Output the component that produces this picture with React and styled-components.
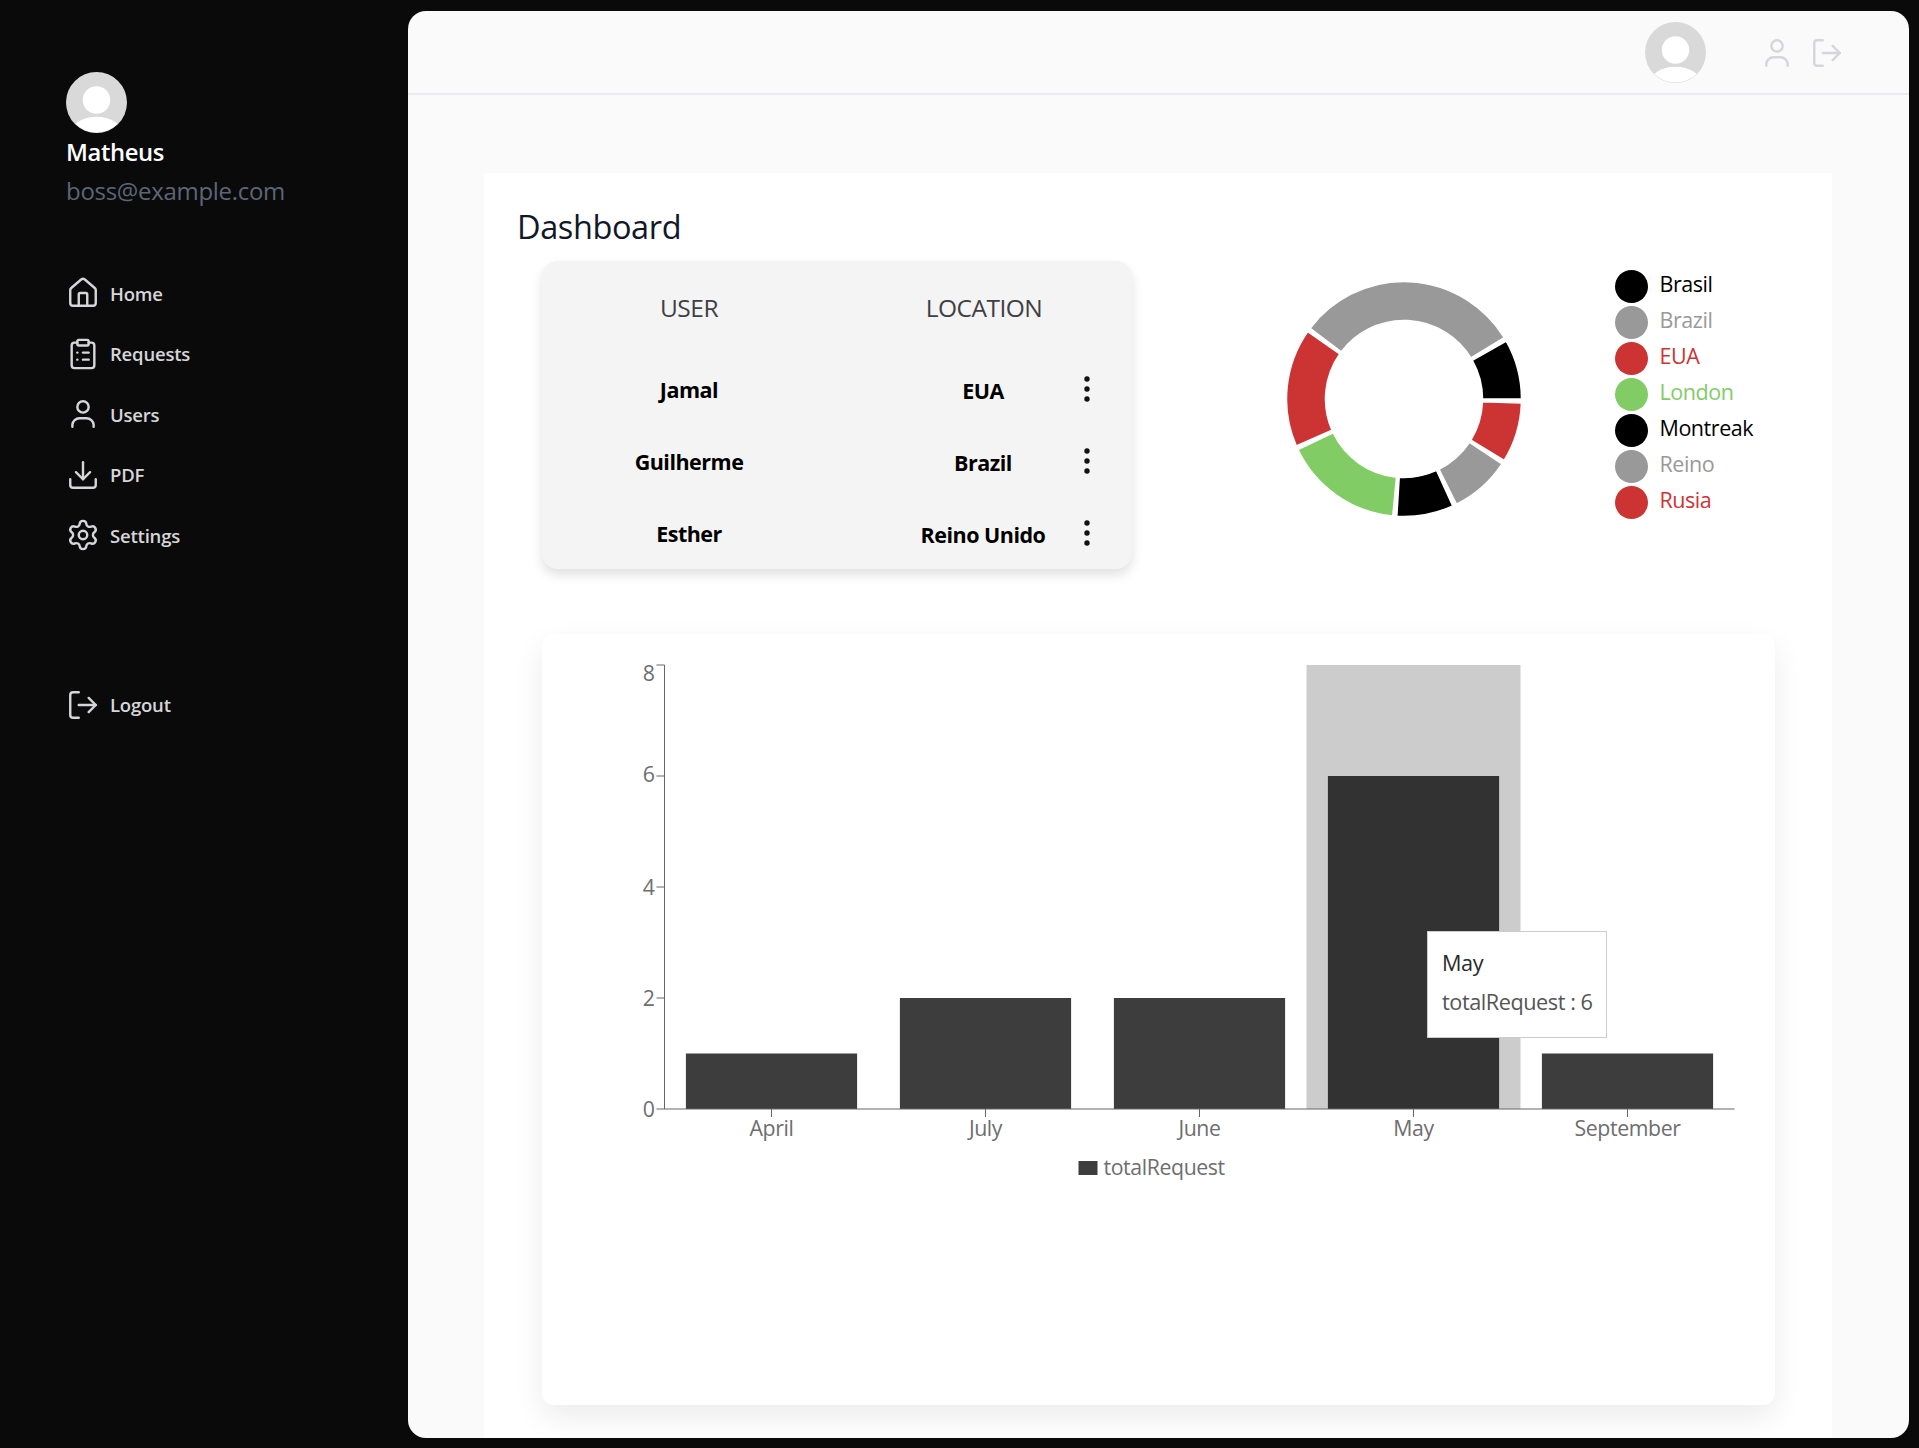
import React from "react";
import styled, { createGlobalStyle } from "styled-components";
import { House, ClipboardList, Download, Settings, LogOut } from "lucide-react";

const FONT = `"Open Sans", "Noto Sans", "Liberation Sans", sans-serif`;

const GlobalStyle = createGlobalStyle`
  html, body {
    margin: 0;
    padding: 0;
    background: #0a0a0a;
    font-family: ${FONT};
  }
  * { box-sizing: border-box; }
`;

const Page = styled.div`
  display: flex;
  height: 1448px;
  padding: 11px 10px 10px 0;
  background: #0a0a0a;
  overflow: hidden;
`;

const Sidebar = styled.aside`
  width: 407.5px;
  flex: none;
  padding: 61px 0 0 66px;
`;

const ProfileName = styled.div`
  margin-top: 3px;
  color: #fff;
  font-size: 23.8px;
  font-weight: 600;
  line-height: 32px;
  letter-spacing: -0.4px;
`;

const ProfileMail = styled.div`
  margin-top: 7px;
  color: #5b6678;
  font-size: 24px;
  line-height: 32px;
  letter-spacing: -0.3px;
`;

const Nav = styled.nav`
  margin-top: 56px;
  display: flex;
  flex-direction: column;
`;

const NavItem = styled.a`
  height: 60.5px;
  display: flex;
  align-items: center;
  gap: 10px;
  color: #d6d6da;
  font-size: 18.5px;
  font-weight: 600;
  letter-spacing: -0.2px;
  margin-top: ${(p) => (p.$pushed ? "109px" : "0")};
  svg { flex: none; }
`;

const Main = styled.main`
  flex: 1;
  display: flex;
  flex-direction: column;
  background: #fafafa;
  border-radius: 18px;
  overflow: hidden;
`;

const TopBar = styled.header`
  height: 84px;
  flex: none;
  display: flex;
  align-items: center;
  justify-content: flex-end;
  padding: 0 65px 0 0;
  border-bottom: 2px solid #ebebef;
`;

const TopIcons = styled.div`
  display: flex;
  align-items: center;
  gap: 16px;
  margin: 2px 0 0 54px;
  color: #d5d5da;
`;

const Content = styled.section`
  flex: 1;
  margin: 78px 77px 0 76.5px;
  padding: 34px 57px 0 58px;
  background: #fff;
`;

const Title = styled.h1`
  margin: 0 0 14px -25px;
  color: #111827;
  font-size: 32.5px;
  font-weight: 400;
  line-height: 40px;
  letter-spacing: -0.4px;
`;

const TopRow = styled.div`
  display: flex;
  align-items: flex-start;
`;

const TableCard = styled.div`
  width: 590px;
  height: 308px;
  flex: none;
  padding-top: 17px;
  display: grid;
  grid-template-columns: 294px 57px 180px 59px;
  grid-template-rows: 75px repeat(3, 72px);
  align-items: center;
  justify-items: center;
  background: #f4f4f4;
  border-radius: 16px;
  box-shadow: 0 6px 12px rgba(0, 0, 0, 0.12);
`;

const HeadCell = styled.div`
  grid-column: ${(p) => p.$span || "auto"};
  align-self: start;
  color: #3f3f46;
  font-size: 24.5px;
  line-height: 60px;
  letter-spacing: -0.5px;
`;

const NameCell = styled.div`
  grid-column: ${(p) => p.$col};
  padding-top: ${(p) => (p.$col === "3" ? "2px" : "0")};
  color: #000;
  font-size: 21.5px;
  font-weight: 700;
  letter-spacing: -0.5px;
  white-space: nowrap;
`;

const Kebab = styled.svg`
  grid-column: 4;
  justify-self: start;
  margin-left: 1px;
  width: 26px;
  height: 26px;
  color: #111;
`;

const Donut = styled.svg`
  flex: none;
  width: 240px;
  height: 240px;
  margin: 17.5px 0 0 151.5px;
`;

const Legend = styled.ul`
  list-style: none;
  margin: 7px 0 0 91px;
  padding: 0;
`;

const LegendRow = styled.li`
  height: 36px;
  display: flex;
  align-items: center;
  gap: 12px;
  color: ${(p) => p.$color};
  font-size: 21.5px;
  letter-spacing: -0.45px;
`;

const LegendText = styled.span`
  margin-bottom: 6px;
`;

const Dot = styled.span`
  width: 33px;
  height: 33px;
  border-radius: 50%;
  background: ${(p) => p.$color};
`;

const ChartCard = styled.div`
  position: relative;
  height: 771px;
  margin-top: 65px;
  background: #fff;
  border-radius: 12px;
  box-shadow: 0 12px 30px rgba(0, 0, 0, 0.08);
`;

const ChartSvg = styled.svg`
  display: block;
  width: 100%;
  height: 100%;
  font-family: ${FONT};
  font-size: 21.3px;
  letter-spacing: -0.4px;
`;

const Tooltip = styled.div`
  position: absolute;
  left: 885px;
  top: 297px;
  width: 180px;
  height: 107px;
  padding: 16px 14px;
  background: #fff;
  border: 1px solid #ccc;
  font-size: 21.7px;
  letter-spacing: -0.45px;
`;

const TooltipLabel = styled.div`
  color: #2a2a2a;
  line-height: 30px;
`;

const TooltipValue = styled.div`
  margin-top: 9px;
  color: #555;
  line-height: 30px;
  white-space: nowrap;
`;

const AvatarSvg = styled.svg`
  display: block;
  flex: none;
`;

const Avatar = ({ size, id }) => (
  <AvatarSvg width={size} height={size} viewBox="0 0 60 60">
    <clipPath id={id}>
      <circle cx="30" cy="30" r="29.6" />
    </clipPath>
    <circle cx="30" cy="30" r="30" fill="#d9d9d9" />
    <g clipPath={`url(#${id})`}>
      <circle cx="30" cy="27.5" r="13.5" fill="#fff" />
      <ellipse cx="30" cy="60" rx="25" ry="16" fill="#fff" />
    </g>
  </AvatarSvg>
);

const UserIcon = ({ size = 34 }) => (
  <svg
    width={size}
    height={size}
    viewBox="0 0 24 24"
    fill="none"
    stroke="currentColor"
    strokeWidth="1.7"
    strokeLinecap="round"
    strokeLinejoin="round"
  >
    <circle cx="12" cy="7" r="4" />
    <path d="M4.5 21v-1.5a5 5 0 0 1 5-4.5h5a5 5 0 0 1 5 4.5V21" />
  </svg>
);

const iconProps = { size: 34, strokeWidth: 1.7 };

const navItems = [
  { label: "Home", icon: <House {...iconProps} /> },
  { label: "Requests", icon: <ClipboardList {...iconProps} /> },
  { label: "Users", icon: <UserIcon /> },
  { label: "PDF", icon: <Download {...iconProps} /> },
  { label: "Settings", icon: <Settings {...iconProps} /> },
];

const rows = [
  ["Jamal", "EUA"],
  ["Guilherme", "Brazil"],
  ["Esther", "Reino Unido"],
];

const BLACK = "#000000";
const GRAY = "#999999";
const RED = "#cc3333";
const GREEN = "#82cc66";

// from / to in degrees, counter clockwise from 3 o'clock
const slices = [
  { name: "Brasil", from: 0, to: 29.5, color: BLACK },
  { name: "Brazil", from: 31.5, to: 143, color: GRAY },
  { name: "EUA", from: 145, to: 203.5, color: RED },
  { name: "London", from: 205.5, to: 264.5, color: GREEN },
  { name: "Montreak", from: 266.5, to: 294.5, color: BLACK },
  { name: "Reino", from: 296.5, to: 326.5, color: GRAY },
  { name: "Rusia", from: 328.5, to: 358, color: RED },
];

const arcPath = (from, to, outer, inner, c = 120) => {
  const pt = (r, a) => {
    const rad = (a * Math.PI) / 180;
    return `${(c + r * Math.cos(rad)).toFixed(2)} ${(c - r * Math.sin(rad)).toFixed(2)}`;
  };
  const large = to - from > 180 ? 1 : 0;
  return `M${pt(outer, from)}A${outer} ${outer} 0 ${large} 0 ${pt(outer, to)}L${pt(inner, to)}A${inner} ${inner} 0 ${large} 1 ${pt(inner, from)}Z`;
};

const plot = { left: 122, right: 1192, top: 31, bottom: 475 };
const bars = [
  { month: "April", value: 1 },
  { month: "July", value: 2 },
  { month: "June", value: 2 },
  { month: "May", value: 6, active: true },
  { month: "September", value: 1 },
];
const band = (plot.right - plot.left) / bars.length;
const yFor = (v) => plot.bottom - (v / 8) * (plot.bottom - plot.top);
const LABEL = "#6e6e6e";

const BarChart = () => (
  <ChartSvg viewBox="0 0 1232 771">
    {bars.map((b, i) => {
      const x = plot.left + band * i;
      return (
        <g key={b.month}>
          {b.active && (
            <rect x={x} y={plot.top} width={band} height={plot.bottom - plot.top} fill="#cccccc" />
          )}
          <rect
            x={x + band * 0.1}
            y={yFor(b.value)}
            width={band * 0.8}
            height={plot.bottom - yFor(b.value)}
            fill={b.active ? "#323232" : "#3d3d3d"}
          />
          <line x1={x + band / 2} x2={x + band / 2} y1={plot.bottom} y2={plot.bottom + 8} stroke="#666" />
          <text x={x + band / 2} y={plot.bottom + 21} textAnchor="middle" dominantBaseline="middle" fill={LABEL}>
            {b.month}
          </text>
        </g>
      );
    })}
    <line x1={plot.left} x2={plot.left} y1={plot.top} y2={plot.bottom} stroke="#666" />
    <line x1={plot.left} x2={plot.right} y1={plot.bottom} y2={plot.bottom} stroke="#666" />
    {[0, 2, 4, 6, 8].map((v) => (
      <g key={v}>
        <line x1={plot.left - 8} x2={plot.left} y1={yFor(v)} y2={yFor(v)} stroke="#666" />
        <text
          x={plot.left - 10}
          y={v === 8 ? yFor(v) + 10 : v === 6 ? yFor(v) : yFor(v) + 2}
          textAnchor="end"
          dominantBaseline="middle"
          fill={LABEL}
        >
          {v}
        </text>
      </g>
    ))}
    <rect x={536} y={527} width={19} height={14} fill="#3d3d3d" />
    <text x={561} y={535} dominantBaseline="middle" fill={LABEL}>
      totalRequest
    </text>
  </ChartSvg>
);

export default function App() {
  return (
    <>
      <GlobalStyle />
      <Page>
        <Sidebar>
          <Avatar size={61} id="side-avatar" />
          <ProfileName>Matheus</ProfileName>
          <ProfileMail>boss@example.com</ProfileMail>
          <Nav>
            {navItems.map((item) => (
              <NavItem key={item.label}>
                {item.icon}
                {item.label}
              </NavItem>
            ))}
            <NavItem $pushed>
              <LogOut {...iconProps} />
              Logout
            </NavItem>
          </Nav>
        </Sidebar>
        <Main>
          <TopBar>
            <Avatar size={61} id="top-avatar" />
            <TopIcons>
              <UserIcon size={34} />
              <LogOut size={34} strokeWidth={1.7} />
            </TopIcons>
          </TopBar>
          <Content>
            <Title>Dashboard</Title>
            <TopRow>
              <TableCard>
                <HeadCell>USER</HeadCell>
                <HeadCell $span="2 / 5">LOCATION</HeadCell>
                {rows.map(([user, place]) => (
                  <React.Fragment key={user}>
                    <NameCell $col="1">{user}</NameCell>
                    <NameCell $col="3">{place}</NameCell>
                    <Kebab viewBox="0 0 26 26">
                      <circle cx="13" cy="3" r="2.7" fill="currentColor" />
                      <circle cx="13" cy="13" r="2.7" fill="currentColor" />
                      <circle cx="13" cy="23" r="2.7" fill="currentColor" />
                    </Kebab>
                  </React.Fragment>
                ))}
              </TableCard>
              <Donut viewBox="0 0 240 240">
                {slices.map((s) => (
                  <path
                    key={s.name}
                    d={arcPath(s.from, s.to, 117.5, 78.5)}
                    fill={s.color}
                    stroke="#fff"
                    strokeWidth="1.5"
                  />
                ))}
              </Donut>
              <Legend>
                {slices.map((s) => (
                  <LegendRow key={s.name} $color={s.color}>
                    <Dot $color={s.color} />
                    <LegendText>{s.name}</LegendText>
                  </LegendRow>
                ))}
              </Legend>
            </TopRow>
            <ChartCard>
              <BarChart />
              <Tooltip>
                <TooltipLabel>May</TooltipLabel>
                <TooltipValue>totalRequest : 6</TooltipValue>
              </Tooltip>
            </ChartCard>
          </Content>
        </Main>
      </Page>
    </>
  );
}
